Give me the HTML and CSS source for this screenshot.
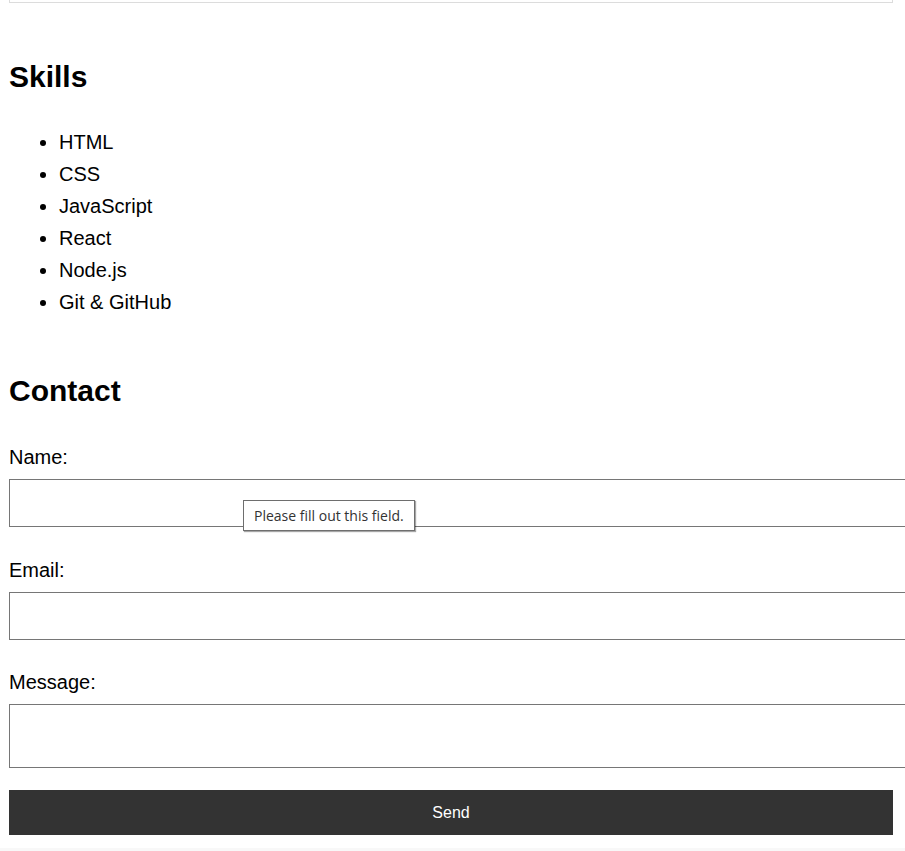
FILE: index.html
```html
<!DOCTYPE html>
<html lang="en">
<head>
<meta charset="utf-8">
<title>Portfolio</title>
<link rel="stylesheet" href="styles.css">
</head>
<body>
<main class="page">
  <div class="card-end"></div>
  <section class="section">
    <h2 class="title">Skills</h2>
    <ul class="skills">
      <li>HTML</li>
      <li>CSS</li>
      <li>JavaScript</li>
      <li>React</li>
      <li>Node.js</li>
      <li>Git &amp; GitHub</li>
    </ul>
  </section>
  <section class="section">
    <h2 class="title">Contact</h2>
    <form class="form" onsubmit="return false">
      <label class="label" for="name">Name:</label>
      <div class="field-wrap first">
        <input class="field" id="name" type="text" required>
        <div class="tooltip">Please fill out this field.</div>
      </div>
      <label class="label" for="email">Email:</label>
      <div class="field-wrap">
        <input class="field" id="email" type="email" required>
      </div>
      <label class="label" for="msg">Message:</label>
      <div class="field-wrap last">
        <textarea class="field area" id="msg" required></textarea>
      </div>
      <button class="send" type="submit">Send</button>
    </form>
  </section>
</main>
<footer class="footer"></footer>
</body>
</html>
```
FILE: styles.css
```css
html, body {
  margin: 0;
  padding: 0;
  background: #fff;
}
body {
  font-family: "Liberation Sans", Arial, sans-serif;
  font-size: 20px;
  line-height: 1.6;
  color: #000;
  overflow: hidden;
}
.page {
  margin-left: 9px;
  width: 884px;
}
.card-end {
  height: 2px;
  border: 1px solid #dcdcdc;
  border-top: none;
}
.section {
  padding-top: 50px;
}
.section + .section {
  padding-top: 49px;
}
.title {
  margin: 0 0 25px;
  font-size: 30px;
  font-weight: bold;
  line-height: 48px;
}
.section + .section .title {
  margin-bottom: 26px;
}
.skills {
  margin: 0;
  padding-left: 50px;
}
.form {
  display: flex;
  flex-direction: column;
  align-items: flex-start;
}
.label {
  display: block;
  line-height: 32px;
  margin-bottom: 6px;
}
.field-wrap {
  position: relative;
  width: 100%;
  margin-bottom: 26px;
}
.field-wrap.first {
  margin-bottom: 27px;
}
.field-wrap.last {
  margin-bottom: 22px;
}
.field {
  display: block;
  width: 100%;
  height: 22px;
  padding: 12px 10px;
  margin: 0;
  border: 1px solid #767676;
  border-radius: 0;
  font: inherit;
  background: #fff;
}
.area {
  height: 38px;
  resize: none;
}
.tooltip {
  position: absolute;
  left: 234px;
  top: 21px;
  padding: 5px 10px 5px;
  background: #fff;
  border: 1px solid #6e6e6e;
  box-shadow: 1px 1px 1px rgba(0, 0, 0, 0.35);
  font-family: "Open Sans", "DejaVu Sans", sans-serif;
  font-size: 14px;
  line-height: 19px;
  color: #333;
  white-space: nowrap;
}
.send {
  display: flex;
  align-items: center;
  justify-content: center;
  width: 100%;
  height: 45px;
  border: none;
  background: #333;
  color: #fff;
  font-family: "Liberation Sans", Arial, sans-serif;
  font-size: 16px;
  cursor: pointer;
}
.footer {
  margin-top: 13px;
  height: 40px;
  background: #f8f8f8;
}
```
